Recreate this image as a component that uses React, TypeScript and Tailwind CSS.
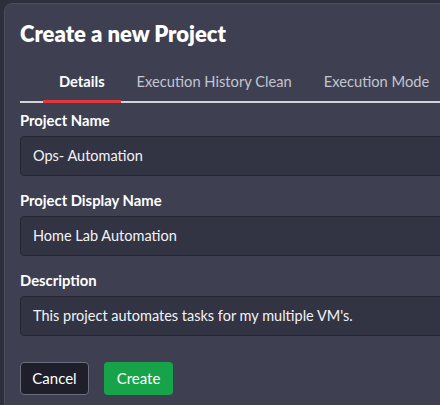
import React from 'react';

const fields = [
  { label: 'Project Name', value: 'Ops- Automation' },
  { label: 'Project Display Name', value: 'Home Lab Automation' },
  { label: 'Description', value: "This project automates tasks for my multiple VM's." },
];

const tabs = ['Details', 'Execution History Clean', 'Execution Mode'];

export default function App() {
  return (
    <div className="w-[440px] h-[405px] overflow-hidden bg-[#2e2f3d] font-['Lato',sans-serif]">
      <div className="ml-[4px] mt-[3px] w-[560px] h-[420px] rounded-lg border border-[#4b4d5f] bg-[#3e4052] pl-[15px] pt-[16px]">
        <h2 className="text-[22px] leading-7 font-extrabold text-white">Create a new Project</h2>

        <div className="mt-[23px] flex border-b-2 border-[#d4d4d8] pl-[23px]">
          {tabs.map((tab, i) => (
            <div
              key={tab}
              className={`-mb-[2px] px-[16px] pb-[9px] text-[14.7px] leading-5 ${
                i === 0 ? 'border-b-[3px] border-[#e0383a] font-bold text-white' : 'border-b-[3px] border-transparent text-[#c3c5d0]'
              }`}
            >
              {tab}
            </div>
          ))}
        </div>

        <div className="mt-[7px] flex flex-col gap-[14px]">
          {fields.map(f => (
            <div key={f.label}>
              <label className="block text-[14.8px] leading-5 font-bold text-white">{f.label}</label>
              <div className="mt-[6px] h-[40px] rounded border border-[#262733] bg-[#323444] pl-[12px] flex items-center text-[14.5px] text-[#f2f2f5]">
                {f.value}
              </div>
            </div>
          ))}
        </div>

        <div className="mt-[26px] flex gap-[15px]">
          <button className="h-[33px] w-[69px] rounded border border-[#6c6e7c] bg-[#1f1f2b] text-[15px] text-white">Cancel</button>
          <button className="h-[33px] w-[69px] rounded bg-[#17a34a] text-[15px] text-white">Create</button>
        </div>
      </div>
    </div>
  );
}
